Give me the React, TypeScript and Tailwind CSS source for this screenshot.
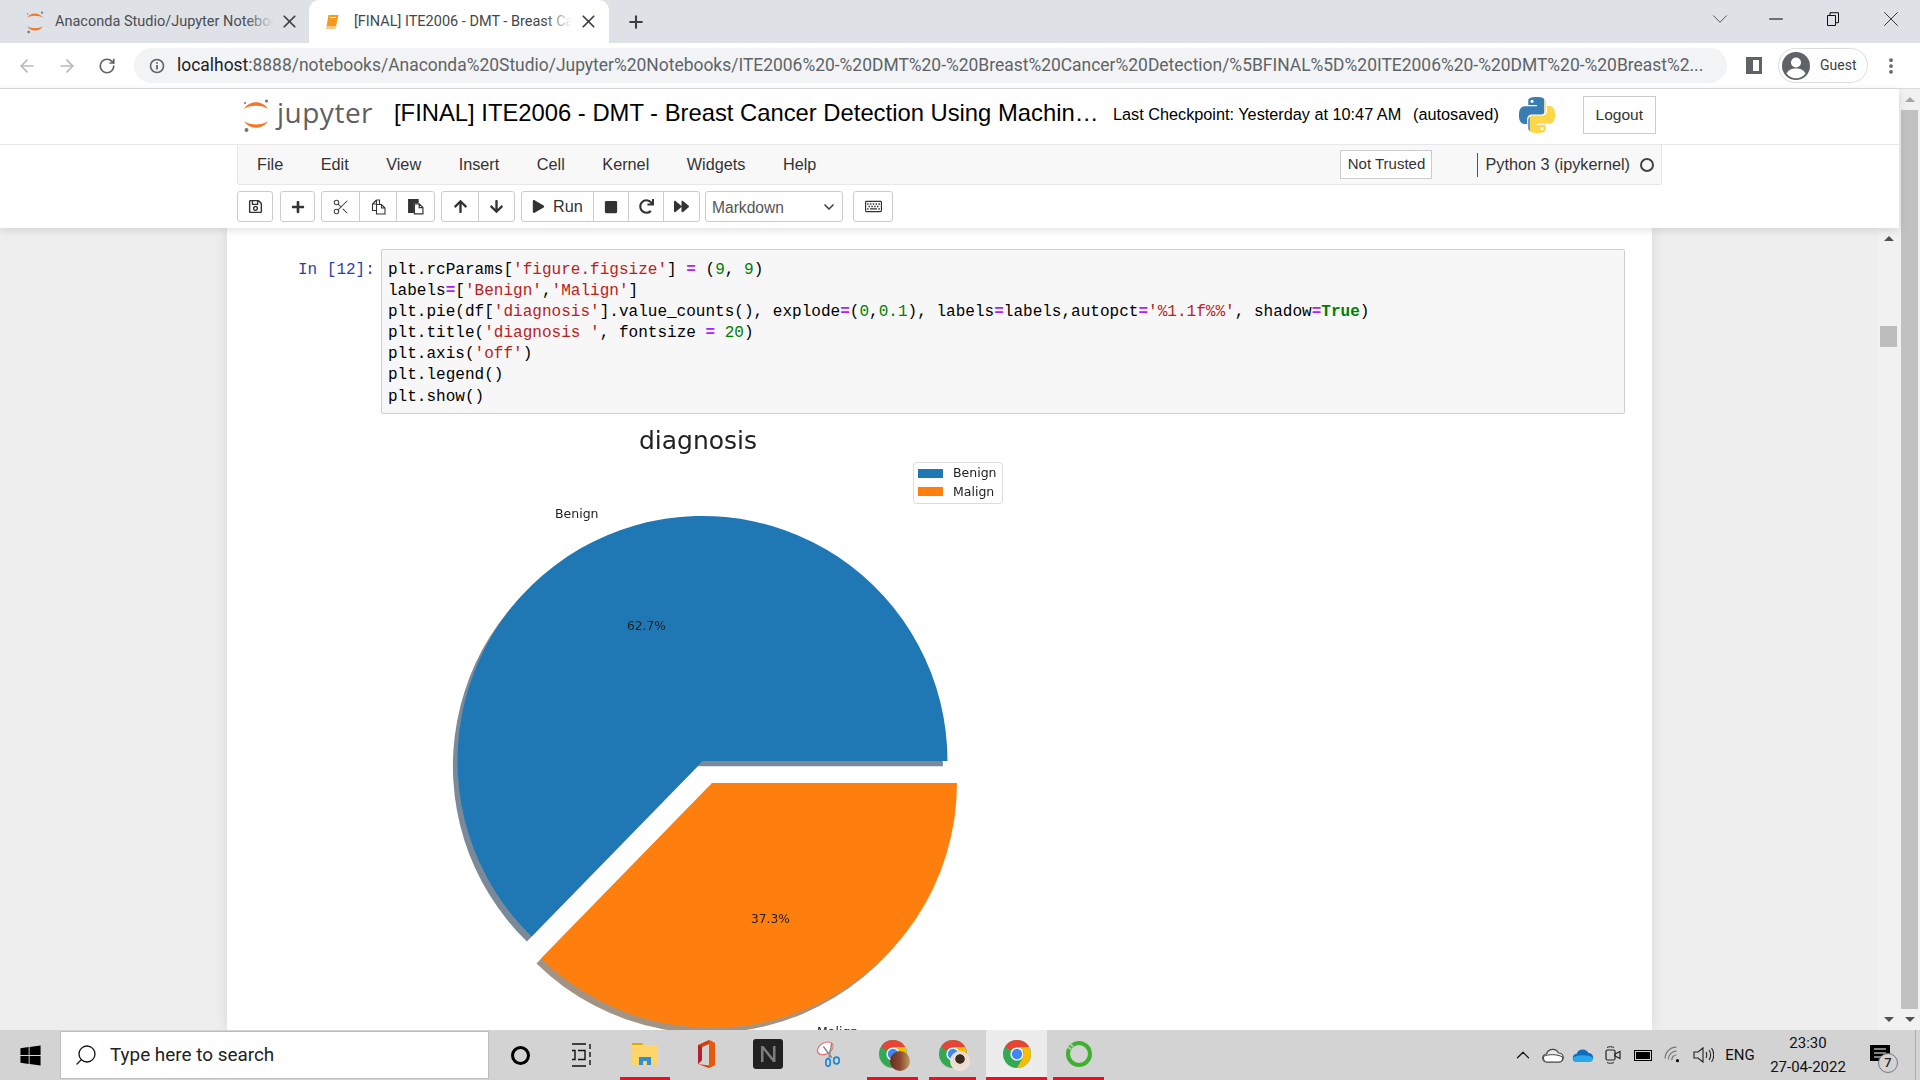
import { ArrowLeft, ArrowRight, ChevronDown, ChevronUp, Minus, MoreVertical, Plus, RotateCw, Scissors, Search, X } from 'lucide-react';
import {
  FaArrowDown,
  FaArrowUp,
  FaForward,
  FaPlay,
  FaPlus,
  FaRedo,
  FaRegKeyboard,
  FaRegSave,
  FaStop,
  FaWindows,
} from 'react-icons/fa';

const PY_PATH =
  'M14.25.18l.9.2.73.26.59.3.45.32.34.34.25.34.16.33.1.3.04.26.02.2-.01.13V8.5l-.05.63-.13.55-.21.46-.26.38-.3.31-.33.25-.35.19-.35.14-.33.1-.3.07-.26.04-.21.02H8.77l-.69.05-.59.14-.5.22-.41.27-.33.32-.27.35-.2.36-.15.37-.1.35-.07.32-.04.27-.02.21v3.06H3.17l-.21-.03-.28-.07-.32-.12-.35-.18-.36-.26-.36-.36-.35-.46-.32-.59-.28-.73-.21-.88-.14-1.05-.05-1.23.06-1.22.16-1.04.24-.87.32-.71.36-.57.4-.44.42-.33.42-.24.4-.16.36-.1.32-.05.24-.01h.16l.06.01h8.16v-.83H6.18l-.01-2.75-.02-.37.05-.34.11-.31.17-.28.25-.26.31-.23.38-.2.44-.18.51-.15.58-.12.64-.1.71-.06.77-.04.84-.02 1.27.05zm-6.3 1.98l-.23.33-.08.41.08.41.23.34.33.22.41.09.41-.09.33-.22.23-.34.08-.41-.08-.41-.23-.33-.33-.22-.41-.09-.41.09zm13.09 3.95l.28.06.32.12.35.18.36.27.36.35.35.47.32.59.28.73.21.88.14 1.04.05 1.23-.06 1.23-.16 1.04-.24.86-.32.71-.36.57-.4.45-.42.33-.42.24-.4.16-.36.09-.32.05-.24.02-.16-.01h-8.22v.82h5.84l.01 2.76.02.36-.05.34-.11.31-.17.29-.25.25-.31.24-.38.2-.44.17-.51.15-.58.13-.64.09-.71.07-.77.04-.84.01-1.27-.04-1.07-.14-.9-.2-.73-.25-.59-.3-.45-.33-.34-.34-.25-.34-.16-.33-.1-.3-.04-.25-.02-.2.01-.13v-5.34l.05-.64.13-.54.21-.46.26-.38.3-.32.33-.24.35-.2.35-.14.33-.1.3-.06.26-.04.21-.02.13-.01h5.84l.69-.05.59-.14.5-.21.41-.28.33-.32.27-.35.2-.36.15-.36.1-.35.07-.32.04-.28.02-.21V6.07h2.09l.14.01zm-6.47 14.25l-.23.33-.08.41.08.41.23.33.33.23.41.08.41-.08.33-.23.23-.33.08-.41-.08-.41-.23-.33-.33-.23-.41-.08-.41.08z';

function JupyterMark({ className }: { className: string }) {
  return (
    <svg viewBox="0 0 30 36" className={className}>
      <path d="M3 12 C8 3, 22 3, 27 12 C22 7.5, 8 7.5, 3 12 Z" fill="#f37726" />
      <path d="M3 24 C8 33, 22 33, 27 24 C22 28.5, 8 28.5, 3 24 Z" fill="#f37726" />
      <circle cx="25.5" cy="4" r="1.6" fill="#767677" />
      <circle cx="4" cy="6" r="1.1" fill="#767677" />
      <circle cx="5.5" cy="33" r="2" fill="#767677" />
    </svg>
  );
}

function BookIcon() {
  return (
    <svg viewBox="0 0 16 16" className="h-4 w-4">
      <path d="M4.5 1h10l-2.5 11.5H2.5Z" fill="#f39a1e" />
      <path d="M2.5 12.5h9.5l-.5 2.5H2Z" fill="#f7c78a" />
      <path d="M6 3.5h6" stroke="#fff" strokeWidth="1" />
    </svg>
  );
}

function PythonLogo() {
  return (
    <svg viewBox="0 0 24 24" className="h-[36px] w-[36px]">
      <defs>
        <clipPath id="pyBlue">
          <polygon points="0,0 17,0 17,12 7.2,12 7.2,24 0,24" />
        </clipPath>
        <clipPath id="pyYellow">
          <polygon points="17,0 24,0 24,24 7.2,24 7.2,12 17,12" />
        </clipPath>
      </defs>
      <path d={PY_PATH} fill="#3a7db5" clipPath="url(#pyBlue)" />
      <path d={PY_PATH} fill="#fdd748" clipPath="url(#pyYellow)" />
    </svg>
  );
}

function CopyIcon() {
  return (
    <svg viewBox="0 0 16 16" className="h-[16px] w-[16px]">
      <path d="M6.5 1H9.5V5M6.5 1 2.5 5V11.5H6.5M6.5 1V5H2.5" fill="none" stroke="#333" strokeWidth="1.1" />
      <path d="M6.5 5.5H11.5L15 9V15H6.5ZM11.5 5.5V9H15" fill="#fff" stroke="#333" strokeWidth="1.1" />
    </svg>
  );
}

function PasteIcon() {
  return (
    <svg viewBox="0 0 16 16" className="h-[17px] w-[17px]">
      <path d="M1 1H11V5H6.5V14H1Z" fill="#333" />
      <path d="M7 5.5H11.5L15 9V15H7ZM11.5 5.5V9H15" fill="#fff" stroke="#333" strokeWidth="1.1" />
    </svg>
  );
}

function ChromeIcon({ className }: { className: string }) {
  return (
    <svg viewBox="0 0 28 28" className={className}>
      <circle cx="14" cy="14" r="14" fill="#34a853" />
      <path d="M14 0A14 14 0 0 1 26.1 7H14a7 7 0 0 0-6.1 3.5L1.9 7A14 14 0 0 1 14 0Z" fill="#ea4335" />
      <path d="M26.1 7A14 14 0 0 1 14 28l6-10.5A7 7 0 0 0 20 10.5L14 7Z" fill="#fbbc04" />
      <circle cx="14" cy="14" r="6.6" fill="#fff" />
      <circle cx="14" cy="14" r="5.2" fill="#4285f4" />
    </svg>
  );
}

function ChromeProfile({ face }: { face: 'brown' | 'light' }) {
  return (
    <div className="relative h-[28px] w-[28px]">
      <ChromeIcon className="h-[28px] w-[28px]" />
      {face === 'brown' ? (
        <span className="absolute left-[11px] top-[11px] h-[20px] w-[20px] rounded-full bg-[linear-gradient(90deg,#6a2a1e_0%,#8a4a30_50%,#c39a5c_100%)]" />
      ) : (
        <span className="absolute left-[11px] top-[11px] h-[20px] w-[20px] rounded-full bg-[radial-gradient(circle_at_50%_40%,#3a2a22_0%,#3a2a22_28%,#e9d9c9_32%,#f2ece6_100%)]" />
      )}
    </div>
  );
}

function ExplorerIcon() {
  return (
    <svg viewBox="0 0 28 28" className="h-[28px] w-[28px]">
      <path d="M1 3h10l2 3H1Z" fill="#e5a50a" />
      <rect x="1" y="5" width="26" height="20" rx="1" fill="#fdd66a" />
      <path d="M8 25v-8h12v8h-4v-4h-4v4Z" fill="#2f8fd8" />
    </svg>
  );
}

function OfficeIcon() {
  return (
    <svg viewBox="0 0 24 30" className="h-[30px] w-[24px]">
      <path d="M15 1 21 4v22l-6 3-11-4 11 1.5V5L8 8v13l-4 4V6Z" fill="#d83b01" />
      <path d="M4 6 8 8v13l-4 4Z" fill="#b7202e" />
      <path d="M15 1 21 4v22l-6 3Z" fill="#e8590c" />
    </svg>
  );
}

function NotionIcon() {
  return (
    <svg viewBox="0 0 30 30" className="h-[30px] w-[30px]">
      <rect width="30" height="30" rx="3" fill="#222" />
      <path d="M8 23V7h2.5L20 19V7h2.5v16H20L10.5 11v12Z" fill="#7d7d7d" />
    </svg>
  );
}

function SnipIcon() {
  return (
    <svg viewBox="0 0 30 30" className="h-[30px] w-[28px]">
      <ellipse cx="11" cy="9" rx="9" ry="6" fill="#fff" stroke="#e86a6a" strokeWidth="1.2" transform="rotate(-30 11 9)" />
      <path d="M9 7 18 19M18 3 15 19" stroke="#888" strokeWidth="1.6" fill="none" />
      <ellipse cx="14" cy="24" rx="2.4" ry="4" fill="none" stroke="#1e88d2" strokeWidth="1.8" />
      <ellipse cx="23" cy="22" rx="3" ry="3.6" fill="none" stroke="#1e88d2" strokeWidth="1.8" />
    </svg>
  );
}

function RingIcon() {
  return (
    <svg viewBox="0 0 28 28" className="h-[28px] w-[28px]">
      <circle cx="14" cy="14" r="11" fill="none" stroke="#3fb02f" strokeWidth="4" />
      <path d="M4 9a11 11 0 0 1 5-5" fill="none" stroke="#a5d99e" strokeWidth="4" strokeDasharray="2 1.5" />
    </svg>
  );
}

function TabFade({ color }: { color: string }) {
  return <span className={`absolute right-0 top-0 h-full w-[28px] ${color}`} />;
}

function ToolBtn({ children, width, last }: { children: React.ReactNode; width: string; last?: boolean }) {
  return (
    <div className={`flex h-full items-center justify-center text-[#333] ${width} ${last ? '' : 'border-r border-[#ccc]'}`}>
      {children}
    </div>
  );
}

function Group({ children }: { children: React.ReactNode }) {
  return <div className="flex h-[31px] rounded-[3px] border border-[#ccc] bg-white">{children}</div>;
}

const S = ({ children }: { children: React.ReactNode }) => <span className="text-[#BA2121]">{children}</span>;
const N = ({ children }: { children: React.ReactNode }) => <span className="text-[#008000]">{children}</span>;
const O = ({ children }: { children: React.ReactNode }) => <span className="font-bold text-[#AA22FF]">{children}</span>;

function CodeCell() {
  return (
    <pre className="font-['Liberation_Mono',monospace] text-[16.04px] leading-[21.1px] text-black">
      plt.rcParams[<S>'figure.figsize'</S>] <O>=</O> (<N>9</N>, <N>9</N>){'\n'}
      labels<O>=</O>[<S>'Benign'</S>,<S>'Malign'</S>]{'\n'}
      plt.pie(df[<S>'diagnosis'</S>].value_counts(), explode<O>=</O>(<N>0</N>,<N>0.1</N>), labels<O>=</O>labels,autopct<O>=</O>
      <S>'%1.1f%%'</S>, shadow<O>=</O><span className="font-bold text-[#008000]">True</span>){'\n'}
      plt.title(<S>'diagnosis '</S>, fontsize <O>=</O> <N>20</N>){'\n'}
      plt.axis(<S>'off'</S>){'\n'}
      plt.legend(){'\n'}
      plt.show()
    </pre>
  );
}

function PieChart() {
  const blue = 'M272.5 341 L517.5 341 A245 245 0 1 0 101.5 516.4 Z';
  const orange = 'M282 363 L527 363 A245 245 0 0 1 111 538.4 Z';
  const font = "'DejaVu Sans', sans-serif";
  return (
    <svg width="600" height="640" viewBox="0 0 600 640" className="block blur-[0.3px]">
      <path d={blue} fill="#7a8a99" transform="translate(-4.6 5.2)" />
      <path d={orange} fill="#a39383" transform="translate(-4.6 5.2)" />
      <path d={blue} fill="#1f77b4" />
      <path d={orange} fill="#ff7f0e" />
      <text x="268" y="29" textAnchor="middle" fontFamily={font} fontSize="25" fill="#222">
        diagnosis
      </text>
      <rect x="483.5" y="42.5" width="89" height="41" rx="3" fill="#fff" stroke="#dcdcdc" />
      <rect x="488" y="49" width="25" height="9" fill="#1f77b4" />
      <rect x="488" y="67" width="25" height="9" fill="#ff7f0e" />
      <g fontFamily={font} fontSize="12.5" fill="#222">
        <text x="523" y="56.5">Benign</text>
        <text x="523" y="76">Malign</text>
        <text x="125" y="97.5">Benign</text>
        <text x="387" y="616">Malign</text>
        <text x="197" y="210" fontSize="12.2">62.7%</text>
        <text x="321" y="503" fontSize="12.2">37.3%</text>
      </g>
    </svg>
  );
}

export default function App() {
  return (
    <div className="flex h-screen w-[1920px] flex-col overflow-hidden bg-white font-['Liberation_Sans',Arial,sans-serif]">
      {/* browser tab strip */}
      <div className="flex h-[43px] shrink-0 items-end bg-[#dee1e6] pl-[8px] font-['Roboto',sans-serif] text-[14.5px]">
        <div className="flex h-[43px] w-[301px] items-center pl-[16px]">
          <JupyterMark className="h-[24px] w-[22px]" />
          <div className="relative ml-[9px] w-[219px] overflow-hidden whitespace-nowrap text-[#4b4d51]">
            Anaconda Studio/Jupyter Notebook
            <TabFade color="bg-[linear-gradient(90deg,transparent,#dee1e6)]" />
          </div>
          <X className="ml-[5px] h-[21px] w-[21px] text-[#3c4043]" strokeWidth={2} />
        </div>
        <div className="flex h-[43px] w-[300px] items-center rounded-t-[10px] bg-white pl-[15px]">
          <BookIcon />
          <div className="relative ml-[14px] w-[218px] overflow-hidden whitespace-nowrap text-[#45474a]">
            [FINAL] ITE2006 - DMT - Breast Cancer
            <TabFade color="bg-[linear-gradient(90deg,transparent,#fff)]" />
          </div>
          <X className="ml-[6px] h-[21px] w-[21px] text-[#3c4043]" strokeWidth={2} />
        </div>
        <div className="flex h-[43px] w-[54px] items-center justify-center">
          <Plus className="h-[20px] w-[20px] text-[#3c4043]" strokeWidth={2.5} />
        </div>
        <div className="ml-auto flex h-[43px] items-center pb-[5px]">
          <ChevronDown className="mr-[32.5px] h-[26px] w-[26px] text-[#3c4043]" strokeWidth={0.8} />
          <Minus className="mr-[39px] h-[22px] w-[22px] text-black" strokeWidth={1.2} />
          <svg viewBox="0 0 14 14" className="mr-[38px] h-[14px] w-[14px]">
            <path d="M1.5 3.5h8v10h-8ZM4 3.5V.7h8.5v10H9.5" fill="none" stroke="#111" />
          </svg>
          <X className="mr-[16px] h-[26px] w-[26px] text-[#222]" strokeWidth={0.8} />
        </div>
      </div>

      {/* address bar */}
      <div className="flex h-[46px] shrink-0 items-center border-b border-[#dadce0] bg-white">
        <ArrowLeft className="ml-[17px] h-[20px] w-[20px] text-[#b5b8bc]" strokeWidth={2} />
        <ArrowRight className="ml-[20px] h-[20px] w-[20px] text-[#b5b8bc]" strokeWidth={2} />
        <RotateCw className="ml-[21px] h-[18px] w-[18px] text-[#5f6368]" strokeWidth={2.2} />
        <div className="ml-[18px] flex h-[35px] w-[1593px] items-center rounded-full bg-[#f1f3f4] pl-[15px] font-['Roboto',sans-serif] text-[17.45px]">
          <svg viewBox="0 0 16 16" className="h-[16px] w-[16px]">
            <circle cx="8" cy="8" r="6.5" fill="none" stroke="#5f6368" strokeWidth="1.6" />
            <path d="M8 7v4.5M8 4.3v1.4" stroke="#5f6368" strokeWidth="1.8" />
          </svg>
          <span className="ml-[12px] w-[1530px] overflow-hidden whitespace-nowrap text-[#5f6368]">
            <span className="text-[#202124]">localhost</span>
            :8888/notebooks/Anaconda%20Studio/Jupyter%20Notebooks/ITE2006%20-%20DMT%20-%20Breast%20Cancer%20Detection/%5BFINAL%5D%20ITE2006%20-%20DMT%20-%20Breast%2...
          </span>
        </div>
        <div className="ml-[19px] h-[17px] w-[16px] border-[3px] border-l-[7px] border-[#5f6368]" />
        <div className="ml-[16px] flex h-[35px] w-[90px] items-center rounded-full border border-[#dadce0] pl-[3px]">
          <svg viewBox="0 0 28 28" className="h-[28px] w-[28px]">
            <circle cx="14" cy="14" r="14" fill="#5f6368" />
            <circle cx="14" cy="10.5" r="5" fill="#fff" />
            <path d="M4.5 21.5c2-4 5.5-5 9.5-5s7.5 1 9.5 5a12 12 0 0 1-19 0Z" fill="#fff" />
          </svg>
          <span className="ml-[10px] font-['Roboto',sans-serif] text-[14px] text-[#3c4043]">Guest</span>
        </div>
        <MoreVertical className="ml-[13px] h-[20px] w-[20px] text-[#5f6368]" strokeWidth={2.5} />
      </div>

      {/* page */}
      <div className="flex min-h-0 flex-1">
        <div className="flex min-w-0 flex-1 flex-col">
          <div className="relative z-10 h-[139px] shrink-0 bg-white shadow-[0_2px_8px_rgba(0,0,0,0.12)]">
            <div className="border-b border-[#e7e7e7]">
              <div className="ml-[237px] flex h-[55px] w-[1425px] items-center pb-[4px] text-black">
                <JupyterMark className="ml-[4px] h-[36px] w-[30px]" />
                <span className="mb-[6px] ml-[6px] w-[117px] font-['Open_Sans',sans-serif] text-[28px] leading-none tracking-[0.5px] text-[#606060]">
                  jupyter
                </span>
                <span className="mb-[3px] w-[703px] whitespace-nowrap text-[23.8px]">
                  [FINAL] ITE2006 - DMT - Breast Cancer Detection Using Machin…
                </span>
                <span className="ml-[16px] w-[300px] whitespace-nowrap text-[16.25px]">
                  Last Checkpoint: Yesterday at 10:47 AM
                </span>
                <span className="whitespace-nowrap text-[16.25px]">(autosaved)</span>
                <div className="ml-[20px]">
                  <PythonLogo />
                </div>
                <div className="ml-[28px] flex h-[38px] w-[73px] items-center justify-center border border-[#ccc] text-[15.5px] text-[#333]">
                  Logout
                </div>
              </div>
            </div>
            <div className="ml-[237px] flex h-[40px] w-[1425px] items-center rounded-b-[3px] border border-t-0 border-[#e7e7e7] bg-[#f8f8f8] text-[16.25px] text-[#333]">
              <div className="ml-[19px] flex gap-[37.5px]">
                <span>File</span>
                <span>Edit</span>
                <span>View</span>
                <span>Insert</span>
                <span>Cell</span>
                <span>Kernel</span>
                <span>Widgets</span>
                <span>Help</span>
              </div>
              <div className="ml-auto flex h-[29px] w-[92px] items-center justify-center border border-[#ccc] bg-white text-[15px]">
                Not Trusted
              </div>
              <div className="ml-[45px] h-[24px] border-l border-[#555]" />
              <span className="ml-[7px] whitespace-nowrap">Python 3 (ipykernel)</span>
              <div className="ml-[10px] mr-[7px] h-[14px] w-[14px] rounded-full border-2 border-[#444]" />
            </div>
            <div className="ml-[237px] mt-[6px] flex items-center">
              <Group>
                <ToolBtn width="w-[34px]" last>
                  <FaRegSave className="h-[15px] w-[15px]" />
                </ToolBtn>
              </Group>
              <div className="ml-[7px]">
                <Group>
                  <ToolBtn width="w-[33px]" last>
                    <FaPlus className="h-[14px] w-[14px]" />
                  </ToolBtn>
                </Group>
              </div>
              <div className="ml-[6px]">
                <Group>
                  <ToolBtn width="w-[38px]">
                    <Scissors className="h-[18px] w-[18px] text-[#444]" strokeWidth={1.4} />
                  </ToolBtn>
                  <ToolBtn width="w-[37px]">
                    <CopyIcon />
                  </ToolBtn>
                  <ToolBtn width="w-[37px]" last>
                    <PasteIcon />
                  </ToolBtn>
                </Group>
              </div>
              <div className="ml-[6px]">
                <Group>
                  <ToolBtn width="w-[37px]">
                    <FaArrowUp className="h-[15px] w-[15px]" />
                  </ToolBtn>
                  <ToolBtn width="w-[35px]" last>
                    <FaArrowDown className="h-[15px] w-[15px]" />
                  </ToolBtn>
                </Group>
              </div>
              <div className="ml-[6px]">
                <Group>
                  <ToolBtn width="w-[72px]">
                    <FaPlay className="h-[13px] w-[13px]" />
                    <span className="ml-[8px] text-[16.25px]">Run</span>
                  </ToolBtn>
                  <ToolBtn width="w-[35px]">
                    <FaStop className="h-[14px] w-[14px]" />
                  </ToolBtn>
                  <ToolBtn width="w-[35px]">
                    <FaRedo className="h-[15px] w-[15px]" />
                  </ToolBtn>
                  <ToolBtn width="w-[35px]" last>
                    <FaForward className="h-[15px] w-[15px]" />
                  </ToolBtn>
                </Group>
              </div>
              <div className="ml-[5px] flex h-[31px] w-[138px] items-center rounded-[3px] border border-[#ccc] bg-white pl-[6px] pr-[5px] text-[15.6px] text-[#555]">
                <span className="mt-[3px]">Markdown</span>
                <ChevronDown className="ml-auto h-[16px] w-[16px] text-[#444]" strokeWidth={2.5} />
              </div>
              <div className="ml-[10px]">
                <Group>
                  <ToolBtn width="w-[38px]" last>
                    <FaRegKeyboard className="h-[17px] w-[17px]" />
                  </ToolBtn>
                </Group>
              </div>
            </div>
          </div>

          <div className="flex min-h-0 flex-1 bg-[#eeeeee]">
            <div className="ml-[227px] w-[1425px] overflow-hidden bg-white pt-[21px] shadow-[0_0_12px_rgba(0,0,0,0.1)]">
              <div className="flex">
                <div className="ml-[71px] w-[83px] pt-[11px] font-['Liberation_Mono',monospace] text-[16px] leading-[21.1px] text-[#303f9f]">
                  In [12]:
                </div>
                <div className="h-[165px] w-[1244px] rounded-[2px] border border-[#cfcfcf] bg-[#f7f7f7] pl-[6px] pt-[10px]">
                  <CodeCell />
                </div>
              </div>
              <div className="ml-[203px] mt-[6px]">
                <PieChart />
              </div>
            </div>
            <div className="ml-[226px] flex w-[21px] flex-col items-center bg-[#f1f1f1] pt-[8px]">
              <div className="h-0 w-0 border-x-[5px] border-b-[5px] border-x-transparent border-b-[#505050]" />
              <div className="mt-[85px] h-[21px] w-[17px] bg-[#bdbdbd]" />
              <div className="mt-auto mb-[8px] h-0 w-0 border-x-[5px] border-t-[5px] border-x-transparent border-t-[#505050]" />
            </div>
          </div>
        </div>

        <div className="flex w-[21px] shrink-0 flex-col items-center bg-[#f1f1f1] pt-[8px]">
          <div className="h-0 w-0 border-x-[5px] border-b-[5px] border-x-transparent border-b-[#a3a3a3]" />
          <div className="mt-[8px] h-[899px] w-[17px] bg-[#c1c1c1]" />
          <div className="mt-auto mb-[8px] h-0 w-0 border-x-[5px] border-t-[5px] border-x-transparent border-t-[#505050]" />
        </div>
      </div>

      {/* windows taskbar */}
      <div className="flex h-[50px] shrink-0 items-stretch bg-[#d3d3d3] font-['Roboto',sans-serif] text-[#111]">
        <div className="flex w-[60px] items-center justify-center">
          <FaWindows className="h-[23px] w-[23px] text-black" />
        </div>
        <div className="my-[1px] flex w-[429px] items-center border border-[#bdbdbd] bg-white pl-[13px] text-[18.9px] text-[#222]">
          <Search className="h-[24px] w-[24px] -scale-x-100 text-[#111]" strokeWidth={1.3} />
          <span className="ml-[12px] mt-[1px]">Type here to search</span>
        </div>
        <div className="flex w-[62px] items-center justify-center">
          <div className="h-[19px] w-[19px] rounded-full border-[3px] border-black" />
        </div>
        <div className="flex w-[61px] items-center justify-center">
          <svg viewBox="0 0 22 24" className="h-[24px] w-[22px]">
            <path d="M1 1h14M1 7.5h3v9H1M7 7.5h7v9H7M1 23h14M19 1v5M19 9v5M19 17v5" fill="none" stroke="#111" strokeWidth="1.4" />
          </svg>
        </div>
        <div className="ml-[8px] flex w-[50px] items-center justify-center border-b-[3px] border-[#e81123]">
          <ExplorerIcon />
        </div>
        <div className="ml-[11px] flex w-[50px] items-center justify-center border-b-[3px] border-transparent">
          <OfficeIcon />
        </div>
        <div className="ml-[12px] flex w-[50px] items-center justify-center border-b-[3px] border-transparent">
          <NotionIcon />
        </div>
        <div className="ml-[11px] flex w-[50px] items-center justify-center border-b-[3px] border-transparent">
          <SnipIcon />
        </div>
        <div className="ml-[13px] flex w-[51px] items-center justify-center border-b-[3px] border-[#e81123]">
          <ChromeProfile face="brown" />
        </div>
        <div className="ml-[11px] flex w-[47px] items-center justify-center border-b-[3px] border-[#e81123]">
          <ChromeProfile face="light" />
        </div>
        <div className="ml-[10px] flex w-[61px] items-center justify-center border-b-[3px] border-[#e81123] bg-[#ececec]">
          <ChromeIcon className="h-[28px] w-[28px]" />
        </div>
        <div className="ml-[6px] flex w-[51px] items-center justify-center border-b-[3px] border-[#e81123]">
          <RingIcon />
        </div>

        <div className="ml-auto flex items-center">
          <div className="flex w-[30px] justify-center">
            <ChevronUp className="h-[22px] w-[22px]" strokeWidth={1.3} />
          </div>
          <div className="flex w-[30px] justify-center">
            <svg viewBox="0 0 22 16" className="h-[16px] w-[22px]">
              <path d="M5 15a4 4 0 0 1-.5-8A6.5 6.5 0 0 1 16.5 6 4.5 4.5 0 0 1 17 15Z" fill="#e8e8e8" stroke="#444" strokeWidth="1.2" />
              <path d="M1.5 9.5C6 7 15 7 20.5 10 21 13 19 15 17 15H5C3 15 1 13 1.5 9.5Z" fill="#fff" stroke="#444" strokeWidth="1" />
            </svg>
          </div>
          <div className="flex w-[30px] justify-center">
            <svg viewBox="0 0 22 16" className="h-[16px] w-[22px]">
              <path d="M5 15a4 4 0 0 1-.5-8A6.5 6.5 0 0 1 16.5 6 4.5 4.5 0 0 1 17 15Z" fill="#0f6cbd" />
              <path d="M1 10.5C6 7.5 15 7.5 21 10.5 21.5 13 19 15 17 15H5C3 15 1 13 1 10.5Z" fill="#28a8ea" />
            </svg>
          </div>
          <div className="flex w-[30px] justify-center">
            <svg viewBox="0 0 16 20" className="h-[20px] w-[16px]">
              <rect x="1" y="5" width="9" height="10" rx="1.5" fill="none" stroke="#222" strokeWidth="1.2" />
              <path d="M10 9l5-2.5v7L10 11Z" fill="none" stroke="#222" strokeWidth="1.2" />
              <path d="M2 2.5c2-1 5-1 7 0M2 17.5c2 1 5 1 7 0" fill="none" stroke="#222" />
            </svg>
          </div>
          <div className="flex w-[30px] justify-center">
            <div className="flex h-[11px] w-[18px] items-center border border-black p-[1px]">
              <div className="h-full w-full bg-black" />
            </div>
          </div>
          <div className="flex w-[30px] justify-center">
            <svg viewBox="0 0 16 16" className="h-[18px] w-[18px]">
              <path d="M1 11A10 10 0 0 1 11 1M4 12A7 7 0 0 1 11 4.5M7 12.5A4 4 0 0 1 11 8" fill="none" stroke="#777" strokeWidth="1.1" />
              <circle cx="12" cy="13" r="1.4" fill="#111" />
            </svg>
          </div>
          <div className="flex w-[30px] justify-center">
            <svg viewBox="0 0 21 18" className="h-[18px] w-[21px]">
              <path d="M1 6h4l5-4v14l-5-4H1Z" fill="none" stroke="#222" strokeWidth="1.1" />
              <path d="M13 6c1 2 1 4 0 6M16 4c2 3 2 7 0 10M18.5 2c3 4 3 10 0 14" fill="none" stroke="#222" strokeWidth="1.1" />
            </svg>
          </div>
          <div className="w-[44px] text-center text-[15px]">ENG</div>
          <div className="w-[92px] text-center text-[15px] leading-[23px]">
            <div>23:30</div>
            <div className="mt-[1px]">27-04-2022</div>
          </div>
          <div className="relative mr-[4px] box-border flex h-full w-[62px] justify-start border-r border-[#aaa] pl-[16px] pt-[15px]">
            <svg viewBox="0 0 20 20" className="h-[20px] w-[20px]">
              <path d="M0 0h20v16H0Z" fill="#000" />
              <path d="M4 4h12M4 8h12M4 12h8" stroke="#fff" strokeWidth="1.2" />
            </svg>
            <span className="absolute left-[24px] top-[23px] flex h-[20px] w-[20px] items-center justify-center rounded-full border border-[#777] bg-[#d3d3d3] text-[13px] font-medium text-[#222]">
              7
            </span>
          </div>
        </div>
      </div>
    </div>
  );
}
